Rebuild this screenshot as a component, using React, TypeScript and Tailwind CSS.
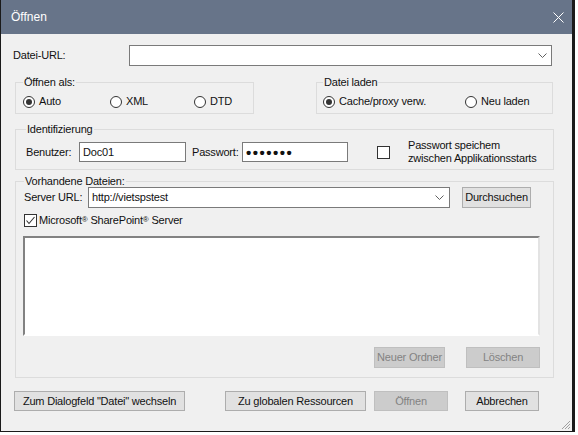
import React from 'react';

// Dropdown arrow used by the combo boxes
function Chevron() {
  return (
    <svg width="9" height="6" viewBox="0 0 9 6" className="shrink-0">
      <polyline points="0.5,0.5 4.5,4.5 8.5,0.5" fill="none" stroke="#606060" strokeWidth="1" />
    </svg>
  );
}

function Radio({ label, checked, className = '' }: { label: string; checked?: boolean; className?: string }) {
  return (
    <div className={`flex items-center gap-[4px] ${className}`}>
      <span className="w-[12px] h-[12px] rounded-full border border-[#333333] bg-white flex items-center justify-center shrink-0">
        {checked && <span className="w-[6px] h-[6px] rounded-full bg-[#333333]" />}
      </span>
      <span>{label}</span>
    </div>
  );
}

function Checkbox({ checked }: { checked?: boolean }) {
  return (
    <span className="w-[13px] h-[13px] border border-[#333333] bg-white flex items-center justify-center shrink-0">
      {checked && (
        <svg width="11" height="11" viewBox="0 0 11 11">
          <polyline points="1.5,5.5 4,8.5 9.5,2" fill="none" stroke="#333333" strokeWidth="1.1" />
        </svg>
      )}
    </span>
  );
}

function Btn({ children, className = '', disabled }: { children: React.ReactNode; className?: string; disabled?: boolean }) {
  return (
    <div
      className={`h-[20px] flex items-center justify-center border shrink-0 ${
        disabled ? 'bg-[#cccccc] border-[#bfbfbf] text-[#838383]' : 'bg-[#e1e1e1] border-[#adadad]'
      } ${className}`}
    >
      {children}
    </div>
  );
}

function GroupTitle({ children }: { children: React.ReactNode }) {
  return <div className="-mt-[7px] w-fit px-[1px] bg-[#f0f0f0] leading-[13px]">{children}</div>;
}

export default function App() {
  return (
    <div className="w-[578px] h-[435px] bg-white font-['Liberation_Sans',Arial,sans-serif] text-[11px] tracking-[-0.2px] text-[#111111]">
      <div className="w-[575px] h-[432px] border-l border-b border-r-[3px] border-[#1a1a1a] bg-[#f0f0f0] flex flex-col relative">
        {/* Title bar */}
        <div className="h-[34px] bg-[#677489] flex items-center pl-[10px] text-white text-[12px] tracking-normal shrink-0">
          <span>Öffnen</span>
          <svg width="11" height="11" viewBox="0 0 11 11" className="ml-auto mr-[8px]">
            <path d="M0.5 0.5 L10.5 10.5 M10.5 0.5 L0.5 10.5" stroke="#ffffff" strokeWidth="1" />
          </svg>
        </div>

        <div className="flex flex-col pl-[12px]">
          {/* Datei-URL */}
          <div className="mt-[11px] h-[21px] flex items-center">
            <span className="w-[116px]">Datei-URL:</span>
            <div className="w-[423px] h-[21px] bg-white border border-[#7a7a7a] flex items-center justify-end pr-[4px]">
              <Chevron />
            </div>
          </div>

          {/* Öffnen als / Datei laden */}
          <div className="mt-[16px] flex">
            <div className="ml-[2px] w-[239px] border border-[#dcdcdc] pl-[7px] pb-[5px]">
              <GroupTitle>Öffnen als:</GroupTitle>
              <div className="mt-[6px] h-[13px] flex items-center">
                <Radio label="Auto" checked className="w-[87px]" />
                <Radio label="XML" className="w-[84px]" />
                <Radio label="DTD" />
              </div>
            </div>
            <div className="ml-[62px] w-[237px] border border-[#dcdcdc] pl-[6px] pb-[5px]">
              <GroupTitle>Datei laden</GroupTitle>
              <div className="mt-[6px] h-[13px] flex items-center">
                <Radio label="Cache/proxy verw." checked className="w-[142px]" />
                <Radio label="Neu laden" />
              </div>
            </div>
          </div>

          {/* Identifizierung */}
          <div className="mt-[15px] ml-[2px] w-[539px] border border-[#dcdcdc] pl-[10px] pb-[7px]">
            <GroupTitle>Identifizierung</GroupTitle>
            <div className="mt-[6px] h-[20px] flex items-center">
              <span className="w-[53px]">Benutzer:</span>
              <div className="w-[107px] h-[20px] bg-white border border-[#7a7a7a] flex items-center pl-[3px]">Doc01</div>
              <span className="ml-[6px] w-[50px]">Passwort:</span>
              <div className="w-[106px] h-[20px] bg-white border border-[#7a7a7a] flex items-center pl-[3px] text-[15px] tracking-[1.5px] font-bold leading-none">
                •••••••
              </div>
              <span className="ml-[29px]">
                <Checkbox />
              </span>
              <div className="ml-[18px] leading-[13px]">
                Passwort speichem
                <br />
                zwischen Applikationsstarts
              </div>
            </div>
          </div>

          {/* Vorhandene Dateien */}
          <div className="mt-[11px] ml-[2px] w-[539px] border border-[#dcdcdc] pl-[8px] pb-[9px]">
            <GroupTitle>Vorhandene Dateien:</GroupTitle>
            <div className="-mt-px h-[21px] flex items-center">
              <span className="w-[64px]">Server URL:</span>
              <div className="w-[362px] h-[21px] bg-white border border-[#7a7a7a] flex items-center pl-[3px] pr-[5px]">
                <span>http://vietspstest</span>
                <span className="ml-auto">
                  <Chevron />
                </span>
              </div>
              <Btn className="ml-[12px] w-[69px] h-[21px]">Durchsuchen</Btn>
            </div>
            <div className="mt-[6px] h-[13px] flex items-center gap-[2px]">
              <Checkbox checked />
              <span>
                Microsoft<sup className="text-[8px] -top-[2px]">®</sup> SharePoint<sup className="text-[8px] -top-[2px]">®</sup> Server
              </span>
            </div>
            <div className="mt-[9px] ml-[-1px] w-[517px] h-[100px] bg-white border-2 border-t-[#828282] border-l-[#828282] border-r-[#e3e3e3] border-b-[#ffffff]" />
            <div className="mt-[11px] flex justify-end pr-[13px] gap-[21px]">
              <Btn disabled className="w-[71px] h-[21px]">Neuer Ordner</Btn>
              <Btn disabled className="w-[74px] h-[21px]">Löschen</Btn>
            </div>
          </div>

          {/* Bottom buttons */}
          <div className="mt-[13px] flex">
            <Btn className="ml-[1px] w-[171px]">Zum Dialogfeld &quot;Datei&quot; wechseln</Btn>
            <Btn className="ml-[40px] w-[141px]">Zu globalen Ressourcen</Btn>
            <Btn disabled className="ml-[8px] w-[74px]">Öffnen</Btn>
            <Btn className="ml-[17px] w-[74px]">Abbrechen</Btn>
          </div>
        </div>

        {/* Resize grip */}
        <svg width="12" height="12" viewBox="0 0 12 12" className="absolute right-[1px] bottom-[1px]">
          <path d="M11 3 L3 11 M11 6 L6 11 M11 9 L9 11" stroke="#a0a0a0" strokeWidth="1" />
        </svg>
      </div>
    </div>
  );
}
